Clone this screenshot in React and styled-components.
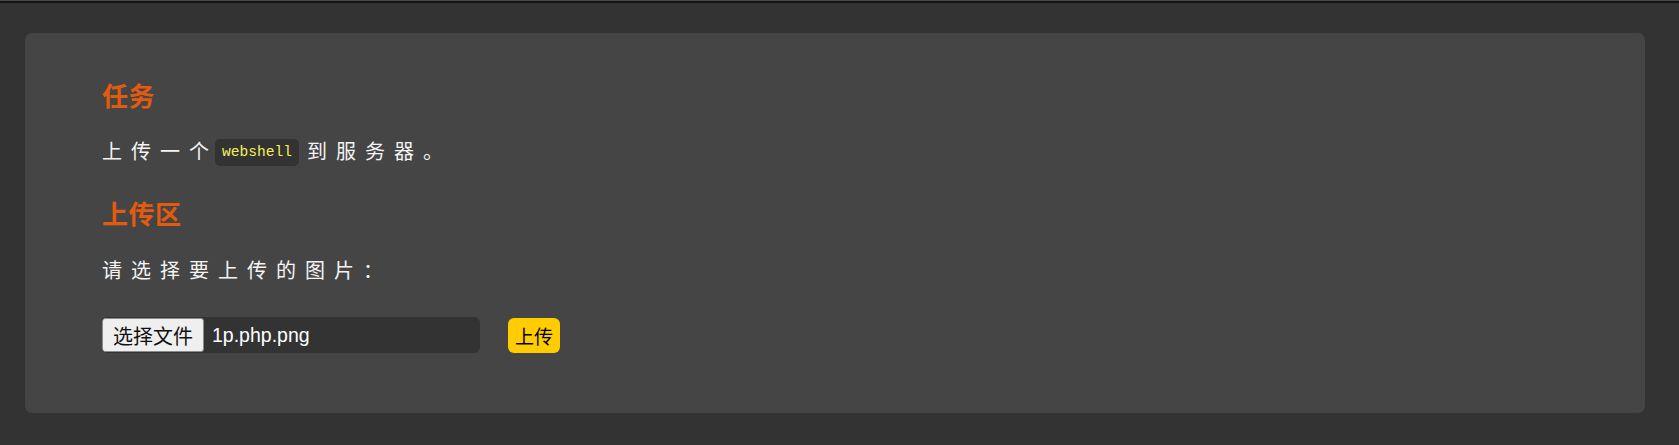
import React from "react"
import styled, {createGlobalStyle} from "styled-components"

const GlobalStyle = createGlobalStyle`
	html, body {
		margin: 0;
		padding: 0;
		background: #333333;
	}
	body {
		font-family: "Noto Sans CJK SC", "Liberation Sans", sans-serif;
		color: #f2f2f2;
	}
`

const TopEdge = styled.div`
	height: 3px;
	border-top: 1px solid #4a4a4a;
	background: #141414;
	box-sizing: border-box;
`

const Card = styled.section`
	margin: 30px 34px 31px 25px;
	padding: 44px 77px 60px;
	background: #454545;
	border-radius: 7px;
	display: flex;
	flex-direction: column;
	align-items: flex-start;
`

const Heading = styled.h2`
	margin: 0 0 ${p => p.$after}px;
	font-size: 26px;
	line-height: 36px;
	font-weight: 700;
	letter-spacing: 0.5px;
	color: #e35b0e;
`

const Text = styled.p`
	margin: 0 0 ${p => p.$after}px;
	font-size: 20px;
	line-height: 30px;
	letter-spacing: 9px;
	color: #f4f4f4;
`

const Code = styled.code`
	display: inline-block;
	vertical-align: middle;
	margin: -3px 8px 0 -3px;
	padding: 0 7px;
	height: 27px;
	line-height: 27px;
	border-radius: 5px;
	background: #333333;
	color: #f5f05a;
	font-family: "Liberation Mono", monospace;
	font-size: 14.6px;
	letter-spacing: 0;
`

const UploadRow = styled.form`
	display: flex;
	align-items: center;
	gap: 28px;
`

const FileBox = styled.label`
	display: flex;
	align-items: center;
	width: 378px;
	height: 36px;
	background: #333333;
	border-radius: 6px;
	overflow: hidden;
`

const ChooseButton = styled.span`
	display: flex;
	align-items: center;
	height: 34px;
	box-sizing: border-box;
	padding: 0 10px;
	border: 1px solid #8a8a8a;
	border-radius: 3px;
	background: #efefef;
	color: #111;
	font-size: 20px;
`

const FileName = styled.span`
	padding-left: 8px;
	font-family: "Liberation Sans", Arial, sans-serif;
	font-size: 19.5px;
	color: #ffffff;
`

const SubmitButton = styled.button`
	height: 35px;
	padding: 0 7px;
	border: none;
	border-radius: 6px;
	background: #ffcc00;
	color: #000;
	font-family: "Noto Sans CJK SC", sans-serif;
	font-size: 19px;
	cursor: pointer;
`

export default function App() {
	return (
		<>
			<GlobalStyle />
			<TopEdge />
			<Card>
				<Heading $after={23}>任务</Heading>
				<Text $after={29}>上传一个<Code>webshell</Code>到服务器。</Text>
				<Heading $after={24}>上传区</Heading>
				<Text $after={32}>请选择要上传的图片：</Text>
				<UploadRow onSubmit={e => e.preventDefault()}>
					<FileBox>
						<ChooseButton>选择文件</ChooseButton>
						<FileName>1p.php.png</FileName>
					</FileBox>
					<SubmitButton type="submit">上传</SubmitButton>
				</UploadRow>
			</Card>
		</>
	)
}
